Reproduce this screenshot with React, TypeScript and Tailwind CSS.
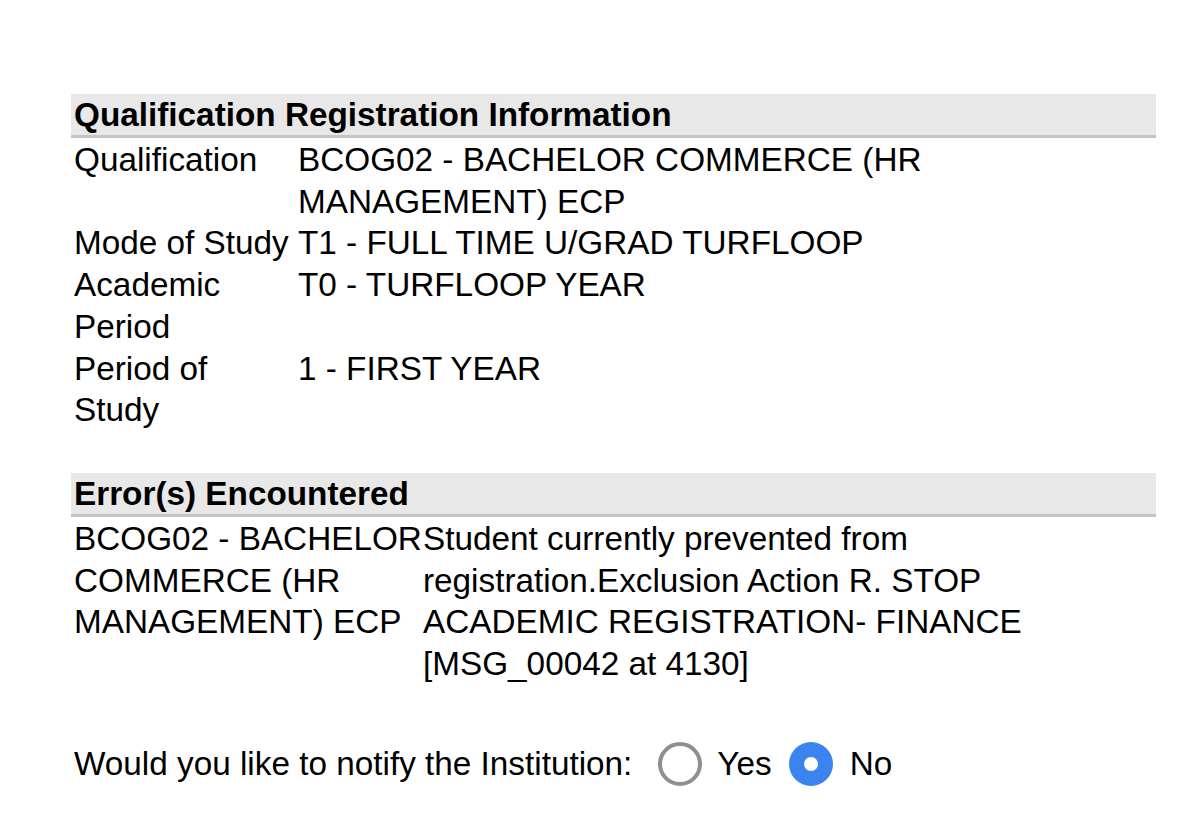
import React from "react";

const font = { fontFamily: '"Liberation Sans", Arial, Helvetica, sans-serif' };

function SectionHeader({ title }: { title: string }) {
  return (
    <div className="w-[1085px] bg-[#e8e8e8] border-b-[3px] border-[#c4c4c4] pl-[3px] h-[44px] flex items-center">
      <span className="font-bold text-[33.3px] leading-[41.7px] text-black">{title}</span>
    </div>
  );
}

function Row({ label, value }: { label: string; value: string }) {
  return (
    <>
      <div className="pr-[4px]">{label}</div>
      <div>{value}</div>
    </>
  );
}

export default function App() {
  return (
    <div className="min-h-[835px] w-[1199px] bg-white overflow-hidden text-black" style={font}>
      <div className="h-[10px] overflow-hidden relative">
        <div className="absolute left-0 right-0 bottom-[8px] text-center text-[33px] leading-[41.7px] text-[#bdbdbd]">
          Please click on the Institution&apos;s Home button to continue
        </div>
      </div>
      <div className="pl-[71px] pt-[84px]">
        <SectionHeader title="Qualification Registration Information" />
        <div className="pl-[3px] grid grid-cols-[224px_660px] text-[33.3px] leading-[41.7px] mt-[1px]">
          <Row label="Qualification" value="BCOG02 - BACHELOR COMMERCE (HR MANAGEMENT) ECP" />
          <Row label="Mode of Study" value="T1 - FULL TIME U/GRAD TURFLOOP" />
          <Row label="Academic Period" value="T0 - TURFLOOP YEAR" />
          <Row label="Period of Study" value="1 - FIRST YEAR" />
        </div>

        <div className="mt-[42px]">
          <SectionHeader title="Error(s) Encountered" />
        </div>
        <div className="pl-[3px] grid grid-cols-[349px_620px] text-[33.3px] leading-[41.7px] mt-[1px]">
          <div>BCOG02 - BACHELOR COMMERCE (HR MANAGEMENT) ECP</div>
          <div>
            Student currently prevented from registration.Exclusion Action R. STOP ACADEMIC
            REGISTRATION- FINANCE [MSG_00042 at 4130]
          </div>
        </div>

        <div className="pl-[3px] mt-[57px] flex items-center text-[33.3px] leading-[41.7px]">
          <span>Would you like to notify the Institution:</span>
          <span className="ml-[26px] w-[44px] h-[44px] rounded-full border-[4px] border-[#8f8f8f] bg-white"></span>
          <span className="ml-[15px]">Yes</span>
          <span className="ml-[17px] w-[44px] h-[44px] rounded-full bg-[#3b84f0] flex items-center justify-center">
            <span className="w-[14px] h-[14px] rounded-full bg-white"></span>
          </span>
          <span className="ml-[17px]">No</span>
        </div>
      </div>
    </div>
  );
}
